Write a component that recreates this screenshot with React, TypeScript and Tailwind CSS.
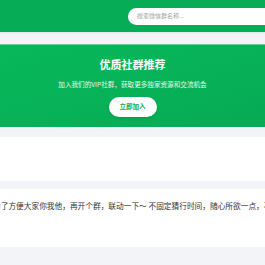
import React from "react";

export default function App() {
  return (
    <div
      className="w-[265px] h-[265px] overflow-hidden bg-[#f3f4f8]"
      style={{ fontFamily: '"Noto Sans CJK SC", "Noto Sans", sans-serif' }}
    >
      <header className="h-[32px] bg-[#06ad56] flex items-center pl-[128px] shadow-[0_1px_2px_rgba(0,0,0,0.08)]">
        <div className="h-[17px] w-[160px] shrink-0 rounded-full bg-white flex items-center pl-[9px] text-[6px] text-[#a3a3a3] leading-none">
          搜索微信群名称...
        </div>
      </header>
      <div className="pt-[12px]">
        <section className="h-[83px] bg-gradient-to-br from-[#08b85a] to-[#06ab55] border-t border-[#5fd38f] flex flex-col items-center pt-[12px]">
          <div className="text-[11px] leading-[15px] font-bold text-white">优质社群推荐</div>
          <div className="mt-[7px] text-[6.6px] leading-[10px] text-white/90">
            加入我们的VIP社群，获取更多独家资源和交流机会
          </div>
          <div className="mt-[8px] h-[20px] w-[48px] rounded-full bg-white flex items-center justify-center text-[6.5px] font-bold text-[#06ad56] shadow-sm">
            立即加入
          </div>
        </section>
        <div className="mt-[10px] h-[44px] bg-white"></div>
        <div className="mt-[8px] h-[58px] bg-white pt-[11px] overflow-hidden">
          <div className="whitespace-nowrap text-[7.7px] leading-[12px] text-[#333333] ml-[-7px]">
            为了方便大家你我他，再开个群，联动一下～ 不固定猜行时间，随心所欲一点，不定期
          </div>
        </div>
      </div>
    </div>
  );
}
